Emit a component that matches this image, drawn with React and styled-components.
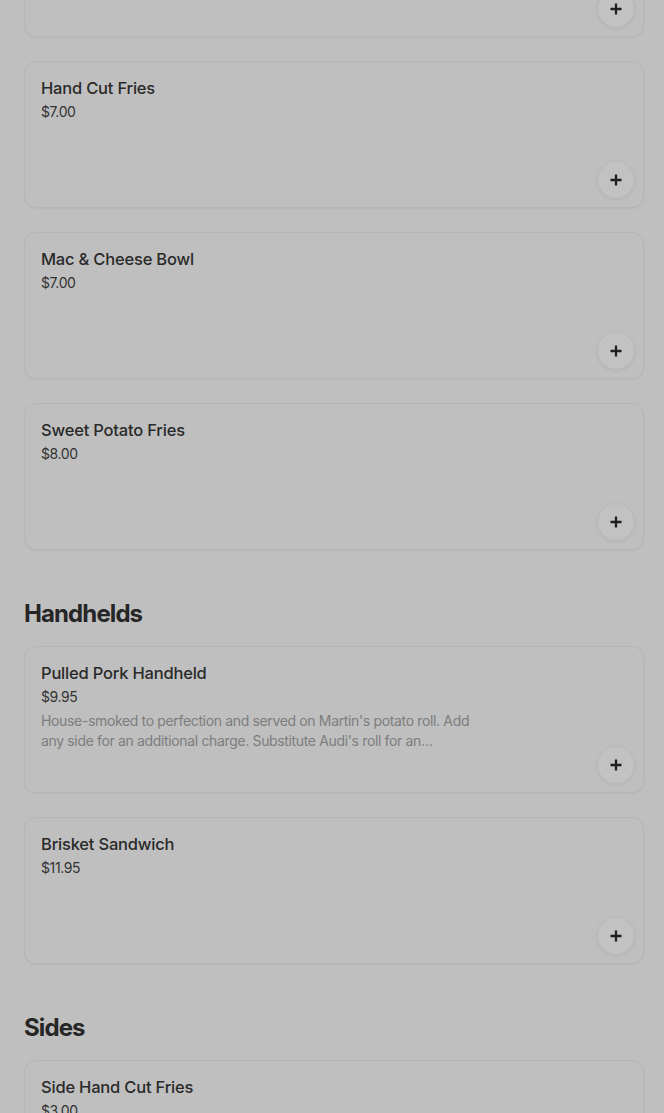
import React from 'react';
import styled, { createGlobalStyle } from 'styled-components';

const GlobalStyle = createGlobalStyle`
  html, body {
    margin: 0;
    padding: 0;
    background: #bfbfbf;
    font-family: Inter, "Noto Sans", sans-serif;
    -webkit-font-smoothing: antialiased;
  }
`;

const menu = [
  {
    title: null,
    items: [
      { name: 'Loaded Tots', price: '$8.00' },
      { name: 'Hand Cut Fries', price: '$7.00' },
      { name: 'Mac & Cheese Bowl', price: '$7.00' },
      { name: 'Sweet Potato Fries', price: '$8.00' },
    ],
  },
  {
    title: 'Handhelds',
    items: [
      {
        name: 'Pulled Pork Handheld',
        price: '$9.95',
        desc: "House-smoked to perfection and served on Martin's potato roll. Add any side for an additional charge. Substitute Audi's roll for an additional charge.",
      },
      { name: 'Brisket Sandwich', price: '$11.95' },
    ],
  },
  {
    title: 'Sides',
    items: [{ name: 'Side Hand Cut Fries', price: '$3.00' }],
  },
];

export default function App() {
  return (
    <>
      <GlobalStyle />
      <Page>
        {menu.map((section, i) => (
          <Section key={i}>
            {section.title && <Heading>{section.title}</Heading>}
            <List>
              {section.items.map((item) => (
                <Card key={item.name}>
                  <Name>{item.name}</Name>
                  <Price>{item.price}</Price>
                  {item.desc && <Desc>{item.desc}</Desc>}
                  <AddButton aria-label="Add">
                    <svg width="12" height="12" viewBox="0 0 12 12">
                      <path d="M6 0.5v11M0.5 6h11" stroke="#1f1f1f" strokeWidth="2.3" />
                    </svg>
                  </AddButton>
                </Card>
              ))}
            </List>
          </Section>
        ))}
      </Page>
    </>
  );
}

const Page = styled.div`
  padding: 0 20px 40px 24px;
  margin-top: -110px;
  display: flex;
  flex-direction: column;
  gap: 48px;
`;

const Section = styled.section`
  display: flex;
  flex-direction: column;
`;

const Heading = styled.h2`
  margin: 0 0 16px;
  font-size: 24px;
  line-height: 32px;
  font-weight: 700;
  letter-spacing: -0.9px;
  color: #262626;
`;

const List = styled.div`
  display: flex;
  flex-direction: column;
  gap: 24px;
`;

const Card = styled.div`
  position: relative;
  height: 147px;
  box-sizing: border-box;
  border: 1px solid #b6b6b6;
  border-radius: 12px;
  background: #bfbfbf;
  box-shadow: 0 1px 2px rgba(0, 0, 0, 0.04);
  padding: 16px 16px 10px 16px;
  display: flex;
  flex-direction: column;
`;

const Name = styled.div`
  font-size: 16.5px;
  line-height: 20px;
  font-weight: 500;
  color: #2a2a2a;
  letter-spacing: -0.2px;
`;

const Price = styled.div`
  margin-top: 4px;
  font-size: 14px;
  line-height: 20px;
  color: #333;
  letter-spacing: -0.4px;
`;

const Desc = styled.div`
  margin-top: 4px;
  max-width: 435px;
  font-size: 14px;
  line-height: 20px;
  color: #7d7d7d;
  letter-spacing: -0.35px;
  display: -webkit-box;
  -webkit-line-clamp: 2;
  -webkit-box-orient: vertical;
  overflow: hidden;
`;

const AddButton = styled.button`
  position: absolute;
  right: 9px;
  bottom: 9px;
  width: 36px;
  height: 36px;
  border-radius: 50%;
  border: none;
  background: #c2c2c2;
  box-shadow: 0 1px 5px rgba(0, 0, 0, 0.08);
  display: flex;
  align-items: center;
  justify-content: center;
  padding: 0;
`;
